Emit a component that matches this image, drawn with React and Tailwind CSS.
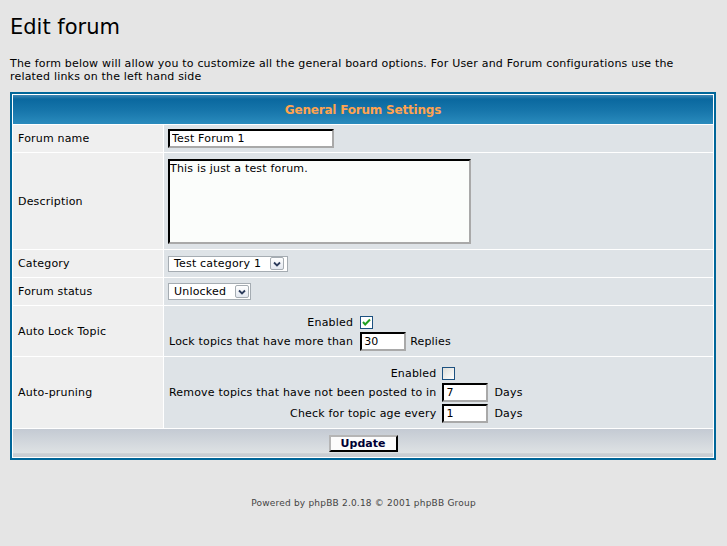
import React from 'react'

const inputCls =
  "block h-[19px] border-2 border-t-black border-l-black border-r-[#a9a9a9] border-b-[#a9a9a9] bg-white px-[2px] text-[11px] leading-[13px] text-black outline-none"

const Arrow = () => (
  <span className="flex h-[13px] w-[14px] items-center justify-center rounded-[2px] border border-[#a5acb2] bg-[linear-gradient(180deg,#ffffff,#e3e8f0)]">
    <svg width="8" height="6" viewBox="0 0 8 6">
      <path d="M1 1.5 L4 4.5 L7 1.5" fill="none" stroke="#2c3c5c" strokeWidth="1.8" />
    </svg>
  </span>
)

const Checkbox = ({ checked }) => (
  <svg width="13" height="13" viewBox="0 0 13 13" className="block">
    <defs>
      <linearGradient id={checked ? 'cbOn' : 'cbOff'} x1="0" y1="0" x2="1" y2="1">
        <stop offset="0" stopColor={checked ? '#ffffff' : '#dcdcd7'} />
        <stop offset="1" stopColor="#ffffff" />
      </linearGradient>
    </defs>
    <rect x="0.5" y="0.5" width="12" height="12" fill={`url(#${checked ? 'cbOn' : 'cbOff'})`} stroke="#1c5180" />
    {checked && (
      <path d="M3 6 L5.2 8.5 L10 3.5" fill="none" stroke="#21a121" strokeWidth="2" />
    )}
  </svg>
)

const Label = ({ children }) => (
  <div className="flex items-center bg-[#efefef] pl-[5px] text-[11px] leading-[13px] text-black">{children}</div>
)

const App = () => {
  return (
    <div className="min-h-screen bg-[#e5e5e5] px-[10px] pt-[15px] tracking-[0.19px] text-black [font-family:'DejaVu_Sans',Verdana,sans-serif]">
      <h1 className="text-[21px] font-normal leading-[25px] tracking-normal">Edit forum</h1>

      <p className="mt-[17px] text-[11px] leading-[13px] whitespace-nowrap">
        The form below will allow you to customize all the general board options. For User and Forum configurations use the
        <br />
        related links on the left hand side
      </p>

      <div className="mt-[9px] w-[706px] border-2 border-[#006699] bg-white p-px">
        <div className="grid grid-cols-[150px_1fr] gap-px">
          {/* header */}
          <div className="col-span-2 flex h-[29px] items-center justify-center bg-[linear-gradient(180deg,#3f87b4_0%,#0a689f_14%,#1776ab_55%,#2a8bbd_100%)] text-[12px] font-bold tracking-[-0.2px] text-[#ffa34f]">
            General Forum Settings
          </div>

          <Label>Forum name</Label>
          <div className="flex h-[27px] items-center bg-[#dee3e7] pl-[4px]">
            <input className={`${inputCls} w-[166px]`} defaultValue="Test Forum 1" readOnly />
          </div>

          <Label>Description</Label>
          <div className="flex h-[96px] items-center bg-[#dee3e7] pl-[4px]">
            <textarea
              className="block h-[85px] w-[303px] resize-none border-2 border-t-black border-l-black border-r-[#a9a9a9] border-b-[#a9a9a9] bg-[#fbfdfb] px-0 py-[1px] text-[11px] leading-[14px] text-black outline-none"
              defaultValue="This is just a test forum."
              readOnly
            />
          </div>

          <Label>Category</Label>
          <div className="flex h-[27px] items-center bg-[#dee3e7] pl-[4px]">
            <div className="flex h-[16px] w-[120px] items-center justify-between border border-[#a5acb2] bg-white pl-[5px] pr-[3px] text-[11px] leading-[13px]">
              <span>Test category 1</span>
              <Arrow />
            </div>
          </div>

          <Label>Forum status</Label>
          <div className="flex h-[27px] items-center bg-[#dee3e7] pl-[4px]">
            <div className="flex h-[17px] w-[83px] items-center justify-between border border-[#a5acb2] bg-white pl-[5px] pr-[1px] text-[11px] leading-[13px]">
              <span>Unlocked</span>
              <Arrow />
            </div>
          </div>

          <Label>Auto Lock Topic</Label>
          <div className="flex h-[50px] items-center bg-[#dee3e7] pl-[5px] pt-[4px]">
            <div className="grid grid-cols-[auto_auto] grid-rows-[17px_21px] items-center gap-x-[7px] text-[11px] leading-[13px]">
              <span className="text-right">Enabled</span>
              <Checkbox checked />
              <span className="text-right">Lock topics that have more than</span>
              <span className="flex items-center gap-[4px]">
                <input className={`${inputCls} w-[46px]`} defaultValue="30" readOnly />
                Replies
              </span>
            </div>
          </div>

          <Label>Auto-pruning</Label>
          <div className="flex h-[71px] items-center bg-[#dee3e7] pl-[5px] pt-[4px]">
            <div className="grid grid-cols-[auto_auto] grid-rows-[17px_21px_21px] items-center gap-x-[6px] text-[11px] leading-[13px]">
              <span className="text-right">Enabled</span>
              <Checkbox />
              <span className="text-right">Remove topics that have not been posted to in</span>
              <span className="flex items-center gap-[6px]">
                <input className={`${inputCls} w-[46px]`} defaultValue="7" readOnly />
                Days
              </span>
              <span className="text-right">Check for topic age every</span>
              <span className="flex items-center gap-[6px]">
                <input className={`${inputCls} w-[46px]`} defaultValue="1" readOnly />
                Days
              </span>
            </div>
          </div>

          {/* footer */}
          <div className="col-span-2 flex h-[28px] items-center justify-center bg-[linear-gradient(180deg,#c4cad3_0%,#d3d8dd_50%,#dee2e4_86%,#c9ced3_88%,#c9ced3_100%)]">
            <button className="h-[17px] w-[69px] border-2 border-t-[#b5b5b5] border-l-[#b5b5b5] border-r-black border-b-black bg-[#fcfcfc] text-[11px] font-bold leading-[11px] tracking-normal text-[#000033]">
              Update
            </button>
          </div>
        </div>
      </div>

      <div className="mt-[38px] text-center text-[9px] leading-[11px] tracking-[0.2px] text-[#444444]">
        Powered by phpBB 2.0.18 © 2001 phpBB Group
      </div>
    </div>
  )
}

export default App
